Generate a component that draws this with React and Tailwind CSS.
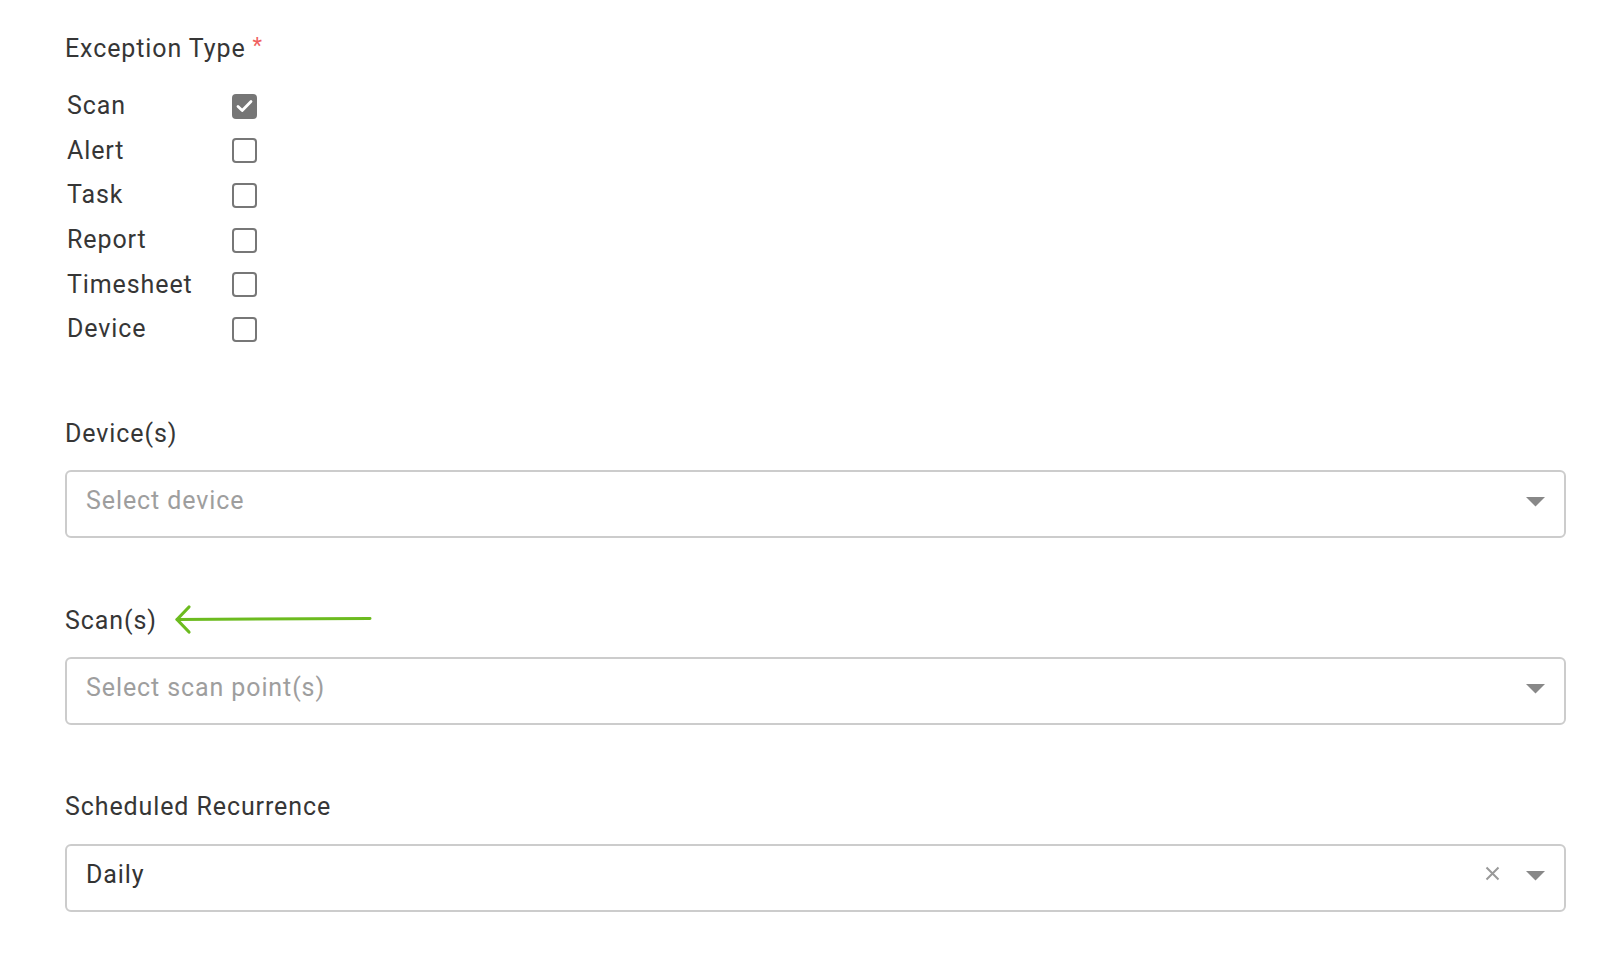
import React from "react";

const options = [
  { label: "Scan", checked: true },
  { label: "Alert", checked: false },
  { label: "Task", checked: false },
  { label: "Report", checked: false },
  { label: "Timesheet", checked: false },
  { label: "Device", checked: false },
];

function Caret() {
  return (
    <svg width="19" height="10" viewBox="0 0 19 10" className="block -mt-[3px]">
      <path d="M0 0 L19 0 L9.5 9.5 Z" fill="#888888" />
    </svg>
  );
}

function Checkbox({ checked }) {
  if (checked) {
    return (
      <div className="w-[25px] h-[25px] rounded-[4px] bg-[#767676] flex items-center justify-center">
        <svg width="17" height="14" viewBox="0 0 17 14">
          <path d="M2 7.5 L6.2 11.5 L15 2.5" stroke="#ffffff" strokeWidth="2.8" fill="none" strokeLinecap="round" strokeLinejoin="round" />
        </svg>
      </div>
    );
  }
  return <div className="w-[25px] h-[25px] rounded-[4px] border-2 border-[#777777] bg-white" />;
}

function Select({ placeholder, value, clearable }) {
  return (
    <div className="h-[68px] w-full border-2 border-[#cccccc] rounded-[6px] flex items-center pl-[19px] pr-[19px] bg-white">
      <span className={value ? "flex-1 text-[#333333] -mt-[5px]" : "flex-1 text-[#9e9e9e] -mt-[5px]"}>{value || placeholder}</span>
      {clearable && (
        <svg width="15" height="15" viewBox="0 0 15 15" className="mr-[26px] -mt-[8px]">
          <path d="M1.5 1.5 L13.5 13.5 M13.5 1.5 L1.5 13.5" stroke="#999999" strokeWidth="2" />
        </svg>
      )}
      <Caret />
    </div>
  );
}

export default function App() {
  return (
    <div className="min-h-[955px] w-[1600px] bg-white font-['Roboto',sans-serif] text-[25px] leading-[28px] tracking-[0.9px] text-[#363636] pl-[65px] pr-[34px] pt-[35px]">
      <div className="h-[28px] flex items-center">
        <span>Exception Type</span>
        <span className="text-[#f06060] ml-[7px] text-[22px] -mt-[6px]">*</span>
      </div>

      <div className="mt-[21px] pl-[2px]">
        {options.map((o) => (
          <div key={o.label} className="h-[44.6px] flex items-center">
            <span className="w-[165px]">{o.label}</span>
            <Checkbox checked={o.checked} />
          </div>
        ))}
      </div>

      <div className="mt-[68px] h-[28px] flex items-center">Device(s)</div>
      <div className="mt-[22px]">
        <Select placeholder="Select device" />
      </div>

      <div className="mt-[69px] h-[28px] flex items-center">
        <span>Scan(s)</span>
        <svg width="200" height="32" viewBox="0 0 200 32" className="ml-[17px] -mt-[2px]">
          <path d="M3 15.5 L196 14.5" stroke="#6cbb1f" strokeWidth="3" strokeLinecap="round" fill="none" />
          <path d="M15 3 L3 15.5 L15 28" stroke="#6cbb1f" strokeWidth="3.2" strokeLinecap="round" strokeLinejoin="round" fill="none" />
        </svg>
      </div>
      <div className="mt-[22px]">
        <Select placeholder="Select scan point(s)" />
      </div>

      <div className="mt-[68px] h-[28px] flex items-center">Scheduled Recurrence</div>
      <div className="mt-[23px]">
        <Select value="Daily" clearable />
      </div>
    </div>
  );
}
